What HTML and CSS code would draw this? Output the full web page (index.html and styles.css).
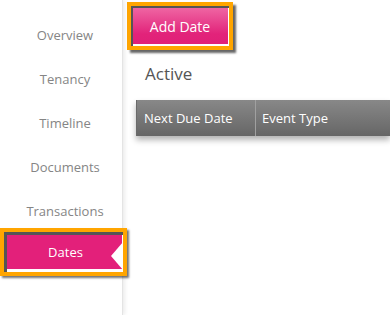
FILE: index.html
```html
<!DOCTYPE html>
<html>
<head>
<meta charset="utf-8">
<link rel="stylesheet" href="styles.css">
</head>
<body>
<div class="layout">
  <nav class="sidebar">
    <a class="nav-item">Overview</a>
    <a class="nav-item">Tenancy</a>
    <a class="nav-item">Timeline</a>
    <a class="nav-item">Documents</a>
    <a class="nav-item">Transactions</a>
    <a class="nav-item active">Dates<span class="notch"></span></a>
  </nav>
  <main class="content">
    <div class="btn-wrap"><button class="btn-add">Add Date</button></div>
    <h2 class="title">Active</h2>
    <div class="table-head">
      <div class="col col-due">Next Due Date</div>
      <div class="col col-type">Event Type</div>
    </div>
  </main>
</div>
</body>
</html>
```

FILE: styles.css
```css
* { box-sizing: border-box; }
html, body { margin: 0; padding: 0; background: #fff; }
body {
  font-family: "Open Sans", "Noto Sans", sans-serif;
  width: 390px;
  height: 315px;
  overflow: hidden;
}
.layout {
  display: flex;
  height: 315px;
}
.sidebar {
  width: 123px;
  flex: 0 0 123px;
  display: flex;
  flex-direction: column;
  padding-top: 13px;
  border-right: 1px solid #e4e4e4;
  box-shadow: 2px 0 4px rgba(0,0,0,0.08);
  position: relative;
  z-index: 2;
}
.nav-item {
  height: 44px;
  line-height: 44px;
  text-align: center;
  font-size: 13px;
  color: #858585;
  padding-left: 8px;
}
.nav-item.active {
  position: relative;
  height: 48px;
  line-height: 40px;
  margin-top: -5px;
  margin-right: -5px;
  border: 4px solid #ffa500;
  background: #e3207a;
  color: #fff;
  padding-left: 4px;
  box-shadow: inset 3px 3px 0 #555, inset -1px -3px 0 #fff, 2px 2px 2px rgba(0,0,0,0.55);
}
.notch {
  position: absolute;
  right: 0;
  top: 10px;
  width: 0;
  height: 0;
  border-top: 14px solid transparent;
  border-bottom: 14px solid transparent;
  border-right: 12px solid #fff;
}
.content {
  flex: 1;
  padding-left: 4px;
  padding-top: 2px;
  min-width: 0;
}
.btn-wrap {
  display: inline-block;
  width: 106px;
  border: 4px solid #ffa500;
  box-shadow: 3px 3px 2px rgba(0,0,0,0.6);
}
.btn-add {
  display: block;
  width: 100%;
  height: 40px;
  border: 0;
  margin: 0;
  padding: 0;
  font-family: inherit;
  font-size: 14px;
  color: #fff;
  background: linear-gradient(#f06aa6, #e2237a 70%, #e01f77);
  box-shadow: inset 2px 2px 0 #555, inset -1px -2px 0 #fff;
}
.title {
  margin: 12px 0 0 18px;
  font-size: 17px;
  font-weight: normal;
  color: #555;
  line-height: 24px;
}
.table-head {
  display: flex;
  margin: 14px 0 0 9px;
  height: 36px;
  background: linear-gradient(#888, #666);
  box-shadow: 0 4px 6px rgba(0,0,0,0.3);
  border-left: 1px solid #6a6a6a;
}
.col {
  color: #fff;
  font-size: 13px;
  line-height: 36px;
  padding-left: 7px;
}
.col-due {
  width: 119px;
  flex: 0 0 119px;
  border-right: 1px solid #a0a0a0;
}
.col-type { flex: 1; padding-left: 6px; }
```
